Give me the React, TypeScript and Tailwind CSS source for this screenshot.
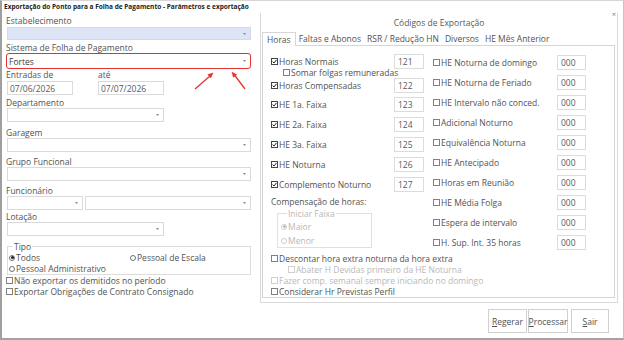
import React from 'react';

type CheckProps = { label: string; checked?: boolean; disabled?: boolean };

function Check({ label, checked, disabled }: CheckProps) {
  return (
    <span className={`flex items-center gap-[1px] whitespace-nowrap ${disabled ? 'text-[#b8b8b8]' : ''}`}>
      <span className={`flex h-[7px] w-[7px] shrink-0 items-center justify-center border bg-white ${disabled ? 'border-[#cfcfcf]' : checked ? 'border-[#444]' : 'border-[#808080]'}`}>
        {checked && (
          <svg viewBox="0 0 7 7" className="h-[5px] w-[5px]">
            <path d="M0.8 3.6 L2.8 5.6 L6.3 1.2" stroke="#222" strokeWidth="1.4" fill="none" />
          </svg>
        )}
      </span>
      {label}
    </span>
  );
}

function Radio({ label, on, disabled }: { label: string; on?: boolean; disabled?: boolean }) {
  return (
    <span className={`flex items-center gap-[1px] whitespace-nowrap ${disabled ? 'text-[#b8b8b8]' : ''}`}>
      <span className={`flex h-[6px] w-[6px] shrink-0 items-center justify-center rounded-full border ${disabled ? 'border-[#cfcfcf]' : 'border-[#707070]'}`}>
        {on && <span className={`h-[3px] w-[3px] rounded-full ${disabled ? 'bg-[#bcbcbc]' : 'bg-[#222]'}`} />}
      </span>
      {label}
    </span>
  );
}

function Arrow() {
  return (
    <svg width="3" height="2" viewBox="0 0 3 2" className="shrink-0">
      <path d="M0 0H3L1.5 2Z" fill="#8a8a8a" />
    </svg>
  );
}

function Combo({ cls }: { cls: string }) {
  return (
    <div className={`flex items-center justify-end border border-[#dadada] bg-white pr-[4px] ${cls}`}>
      <Arrow />
    </div>
  );
}

function Code({ v }: { v: string }) {
  return <div className="flex h-[15px] items-center border border-[#dcdcdc] bg-white pl-[3px] text-[#5a5a5a]">{v}</div>;
}

const LEFT_ROWS: [string, string][] = [
  ['HE 1a. Faixa', '123'],
  ['HE 2a. Faixa', '124'],
  ['HE 3a. Faixa', '125'],
  ['HE Noturna', '126'],
  ['Complemento Noturno', '127'],
];

const RIGHT_ROWS = [
  'HE Noturna de domingo', 'HE Noturna de Feriado', 'HE Intervalo não conced.', 'Adicional Noturno',
  'Equivalência Noturna', 'HE Antecipado', 'Horas em Reunião', 'HE Média Folga',
  'Espera de intervalo', 'H. Sup. Int. 35 horas',
];

const TABS = ['Horas', 'Faltas e Abonos', 'RSR / Redução HN', 'Diversos', 'HE Mês Anterior'];

function Btn({ first, rest, cls }: { first: string; rest: string; cls: string }) {
  return (
    <button className={`flex h-[24px] items-center justify-center border border-[#d0d0d0] bg-white text-[#505050] ${cls}`}>
      <span className="underline">{first}</span>{rest}
    </button>
  );
}

export default function App() {
  return (
    <div className="relative h-[340px] w-[624px] overflow-hidden bg-white font-['Open_Sans',sans-serif] text-[8.5px] leading-[11px] text-[#525252]">
      <div className="flex h-full flex-col border-t border-r border-b-2 border-l-2 border-t-[#d6d6d6] border-r-[#c4c4c4] border-b-[#a3a3a3] border-l-[#9f9f9f]">
        <div className="h-[12px] pl-[2px] text-[6.5px] font-bold leading-[12px] text-[#222]">
          Exportação do Ponto para a Folha de Pagamento - Parâmetros e exportação
        </div>

        <div className="flex flex-1">
          {/* parametros */}
          <div className="w-[258px] pl-[4px]">
            <div className="mt-[2px]">Estabelecimento</div>
            <div className="ml-[1px] mt-[1px] flex h-[13px] w-[244px] items-center justify-end border border-[#d3d9ea] bg-[#dde4f5] pr-[4px]">
              <Arrow />
            </div>
            <div className="mt-[2px]">Sistema de Folha de Pagamento</div>
            <div className="flex h-[16px] w-[245px] items-center justify-between rounded-[3px] border-[1.5px] border-[#e3312d] bg-white pr-[4px] pl-[2px] text-[#3a3a3a]">
              Fortes
              <Arrow />
            </div>
            <div className="flex">
              <span className="w-[92px]">Entradas de</span>
              <span>até</span>
            </div>
            <div className="ml-[1px] mt-[1px] flex gap-[25px]">
              <div className="flex h-[14px] w-[66px] items-center border border-[#dadada] pl-[2px] text-[#5a5a5a]">07/06/2026</div>
              <div className="flex h-[14px] w-[66px] items-center border border-[#dadada] pl-[2px] text-[#5a5a5a]">07/07/2026</div>
            </div>
            <div className="mt-[2px]">Departamento</div>
            <Combo cls="ml-[1px] h-[14px] w-[157px]" />
            <div className="mt-[5px]">Garagem</div>
            <Combo cls="ml-[1px] h-[14px] w-[244px]" />
            <div className="mt-[4px]">Grupo Funcional</div>
            <Combo cls="ml-[1px] h-[14px] w-[244px]" />
            <div className="mt-[4px]">Funcionário</div>
            <div className="ml-[1px] flex gap-[2px]">
              <Combo cls="h-[14px] w-[76px]" />
              <Combo cls="h-[14px] w-[166px]" />
            </div>
            <div className="mt-[1px]">Lotação</div>
            <Combo cls="ml-[1px] h-[14px] w-[157px]" />

            <fieldset className="ml-[1px] mt-[5px] w-[244px] border border-[#dddddd] pl-[1px]">
              <legend className="ml-[4px] px-[1px]">Tipo</legend>
              <div className="grid grid-cols-[121px_1fr]">
                <Radio label="Todos" on />
                <Radio label="Pessoal de Escala" />
                <Radio label="Pessoal Administrativo" />
              </div>
            </fieldset>
            <Check label="Não exportar os demitidos no período" />
            <Check label="Exportar Obrigações de Contrato Consignado" />
          </div>

          {/* codigos */}
          <div className="flex w-[358px] flex-col">
            <div className="flex h-[290px] flex-col border-r border-b border-l border-[#dadada]">
              <div className="mt-[4px] text-center text-[#585858]">Códigos de Exportação</div>
              <div className="mt-[4px] flex items-end pl-[1px]">
                {TABS.map((t, i) =>
                  i === 0 ? (
                    <div key={t} className="relative z-10 -mb-px flex h-[14px] items-center border border-b-0 border-[#d6d6d6] bg-white px-[4px]">{t}</div>
                  ) : (
                    <div key={t} className="flex h-[13px] items-center px-[3px]">{t}</div>
                  )
                )}
              </div>
              <div className="ml-[1px] mr-[2px] h-[253px] border border-[#d6d6d6] pl-[8px] pt-[7px]">
                <div className="flex items-start gap-[9px]">
                  <div className="w-[153px]">
                    <div className="flex h-[16px] items-center justify-between">
                      <Check label="Horas Normais" checked />
                      <div className="w-[30px]"><Code v="121" /></div>
                    </div>
                    <div className="-mt-[2px] flex h-[10px] items-center pl-[12px]">
                      <Check label="Somar folgas remuneradas" />
                    </div>
                    <div className="flex h-[17px] items-center justify-between">
                      <Check label="Horas Compensadas" checked />
                      <div className="w-[30px]"><Code v="122" /></div>
                    </div>
                    {LEFT_ROWS.map(([l, v]) => (
                      <div key={l} className="flex h-[20px] items-center justify-between">
                        <Check label={l} checked />
                        <div className="w-[30px]"><Code v={v} /></div>
                      </div>
                    ))}
                    <div className="flex h-[14px] items-center">Compensação de horas:</div>
                    <fieldset className="ml-[6px] w-[95px] border border-[#e0e0e0] pb-[1px] pl-[3px]">
                      <legend className="ml-[6px] px-[1px] text-[#b8b8b8]">Iniciar Faixa</legend>
                      <div className="flex flex-col gap-[3px] pt-[2px]">
                        <Radio label="Maior" on disabled />
                        <Radio label="Menor" disabled />
                      </div>
                    </fieldset>
                  </div>
                  <div className="-mt-[1px] w-[153px]">
                    {RIGHT_ROWS.map((l) => (
                      <div key={l} className="flex h-[20px] items-center justify-between">
                        <Check label={l} />
                        <div className="w-[29px]"><Code v="000" /></div>
                      </div>
                    ))}
                  </div>
                </div>
                <div className="mt-[1px]">
                  <Check label="Descontar hora extra noturna da hora extra" />
                  <div className="pl-[17px]">
                    <Check label="Abater H Devidas primeiro da HE Noturna" disabled />
                  </div>
                  <Check label="Fazer comp. semanal sempre iniciando no domingo" disabled />
                  <Check label="Considerar Hr Previstas Perfil" />
                </div>
              </div>
            </div>
            <div className="mt-[6px] flex justify-end pr-[9px]">
              <Btn first="R" rest="egerar" cls="w-[39px]" />
              <Btn first="P" rest="rocessar" cls="ml-[1px] w-[40px]" />
              <Btn first="S" rest="air" cls="ml-[3px] w-[38px]" />
            </div>
          </div>
        </div>
      </div>

      <span className="absolute right-[8px] top-[10px] text-[7px] leading-[9px] text-[#777]">×</span>

      <svg className="pointer-events-none absolute left-0 top-0" width="624" height="340">
        <g stroke="#e3312d" strokeWidth="1.3" fill="#e3312d">
          <line x1="195" y1="89" x2="210" y2="76" />
          <polygon points="213,73 210.7,77.9 207.8,74.6" strokeWidth="0.5" />
          <line x1="245" y1="89" x2="234.5" y2="75" />
          <polygon points="232,72 236.7,74.7 233.3,77.3" strokeWidth="0.5" />
        </g>
      </svg>
    </div>
  );
}
